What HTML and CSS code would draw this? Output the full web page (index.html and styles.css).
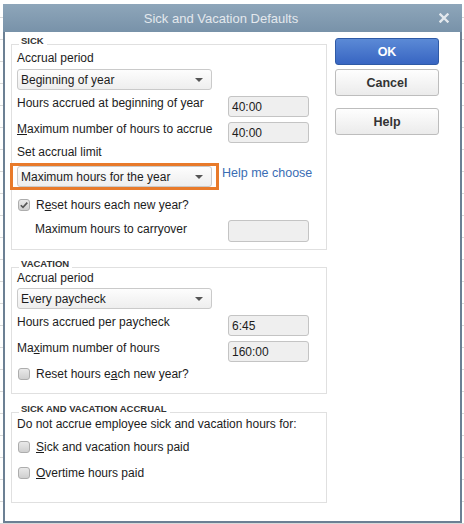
FILE: index.html
```html
<!DOCTYPE html>
<html lang="en">
<head>
    <meta charset="UTF-8">
    <meta name="viewport" content="width=device-width, initial-scale=1.0">
    <title>Sick and Vacation Defaults</title>
    <link rel="stylesheet" href="styles.css">
</head>
<body>
    <div class="dialog">
        <div class="titlebar">
            <span class="title">Sick and Vacation Defaults</span>
            <span class="close">
                <svg width="10" height="10" viewBox="0 0 10 10"><path d="M1.5 1.5 L8.5 8.5 M8.5 1.5 L1.5 8.5" stroke="#e3e8ed" stroke-width="2.4" stroke-linecap="square"/></svg>
            </span>
        </div>

        <div class="dialog-body">
            <div class="groups">
                <fieldset class="group sick">
                    <legend>SICK</legend>
                    <div class="label">Accrual period</div>
                    <div class="select"><span>Beginning of year</span><i class="caret"></i></div>
                    <div class="row first">
                        <span class="row-label">Hours accrued at beginning of year</span>
                        <div class="field">40:00</div>
                    </div>
                    <div class="row">
                        <span class="row-label"><u>M</u>aximum number of hours to accrue</span>
                        <div class="field">40:00</div>
                    </div>
                    <div class="label limit">Set accrual limit</div>
                    <div class="limit-row">
                        <div class="highlight">
                            <div class="select"><span>Maximum hours for the year</span><i class="caret"></i></div>
                        </div>
                        <a class="help-link" href="#">Help me choose</a>
                    </div>
                    <label class="checkrow reset">
                        <span class="check checked">
                            <svg width="10" height="10" viewBox="0 0 10 10"><path d="M1.8 5.2 L4 7.4 L8.3 2.6" fill="none" stroke="#555" stroke-width="1.6"/></svg>
                        </span>
                        <span>R<u>e</u>set hours each new year?</span>
                    </label>
                    <div class="row carry">
                        <span class="row-label">Maximum hours to carryover</span>
                        <div class="field"></div>
                    </div>
                </fieldset>

                <fieldset class="group vacation">
                    <legend>VACATION</legend>
                    <div class="label">Accrual period</div>
                    <div class="select"><span>Every paycheck</span><i class="caret"></i></div>
                    <div class="row first">
                        <span class="row-label">Hours accrued per paycheck</span>
                        <div class="field">6:45</div>
                    </div>
                    <div class="row">
                        <span class="row-label">Ma<u>x</u>imum number of hours</span>
                        <div class="field">160:00</div>
                    </div>
                    <label class="checkrow">
                        <span class="check"></span>
                        <span>Reset hours e<u>a</u>ch new year?</span>
                    </label>
                </fieldset>

                <fieldset class="group accrual">
                    <legend>SICK AND VACATION ACCRUAL</legend>
                    <div class="label">Do not accrue employee sick and vacation hours for:</div>
                    <label class="checkrow">
                        <span class="check"></span>
                        <span><u>S</u>ick and vacation hours paid</span>
                    </label>
                    <label class="checkrow">
                        <span class="check"></span>
                        <span><u>O</u>vertime hours paid</span>
                    </label>
                </fieldset>
            </div>

            <div class="buttons">
                <button class="btn primary">OK</button>
                <button class="btn">Cancel</button>
                <button class="btn help">Help</button>
            </div>
        </div>
    </div>
</body>
</html>
```

FILE: styles.css
```css
body {
    margin: 0;
    font-family: "Liberation Sans", Arial, sans-serif;
    font-size: 12px;
    color: #1c1c1c;
    background-color: #fff;
    background-image:
        repeating-linear-gradient(to right, transparent 0, transparent 66px, #d6d6d6 66px, #d6d6d6 67px, transparent 67px, transparent 64px),
        repeating-linear-gradient(to bottom, transparent 0, transparent 17px, #d9d9d9 17px, #d9d9d9 18px, transparent 18px, transparent 22px);
    background-size: 64px 100%, 100% 22px;
    height: 524px;
    overflow: hidden;
}
.dialog {
    margin: 4px 0 0 3px;
    width: 455px;
    background: #fff;
    border: 2px solid #6c8094;
    border-top: none;
}
.titlebar {
    display: flex;
    align-items: center;
    height: 28px;
    margin: 0 -2px;
    background: linear-gradient(#8ea6ba, #7892a9);
}
.title {
    flex: 1;
    text-align: center;
    font-size: 13px;
    color: #e3e8ed;
}
.close {
    width: 22px;
    display: flex;
    align-items: center;
    padding-right: 1px;
}
.dialog-body {
    display: flex;
    gap: 8px;
    padding: 0 0 18px 6px;
}
.groups {
    width: 316px;
    padding-top: 7px;
}
.group {
    margin: 0;
    padding: 0 17px 0 5px;
    border: 1px solid #e0e0e0;
    min-width: 0;
}
.group legend {
    margin-left: 2px;
    padding: 0 3px 0 2px;
    line-height: 10px;
    font-size: 9.5px;
    font-weight: bold;
    color: #333;
    transform: translateY(-3px);
}
.sick {
    padding-top: 3px;
    padding-bottom: 7px;
}
.vacation {
    margin-top: 12px;
    padding-bottom: 13px;
}
.accrual {
    margin-top: 13px;
    padding-top: 1px;
    padding-bottom: 23px;
}
.label {
    line-height: 12px;
}
.label.limit {
    margin-top: 3px;
}
.select {
    display: flex;
    align-items: center;
    justify-content: space-between;
    box-sizing: border-box;
    width: 195px;
    height: 21px;
    margin-top: 5px;
    padding: 0 8px 0 3px;
    border: 1px solid #cacaca;
    border-radius: 3px;
    background: linear-gradient(#fdfdfd, #eeeeee);
}
.vacation .select {
    margin-top: 4px;
}
.caret {
    width: 0;
    height: 0;
    border-left: 4px solid transparent;
    border-right: 4px solid transparent;
    border-top: 4px solid #555;
}
.row {
    display: flex;
    align-items: flex-start;
    justify-content: space-between;
    margin-top: 5px;
}
.row.first {
    margin-top: 6px;
}
.row-label {
    line-height: 14px;
}
.field {
    box-sizing: border-box;
    width: 81px;
    height: 21px;
    padding: 3px 3px 0;
    border: 1px solid #c4c4c4;
    border-radius: 3px;
    background: #efefef;
    line-height: 15px;
}
.limit-row {
    display: flex;
    align-items: flex-start;
    margin-top: 5px;
}
.highlight {
    margin-left: -7px;
    padding: 0 4px;
    border: 3px solid #e87a2a;
}
.highlight .select {
    margin-top: 0;
}
.help-link {
    margin: 3px -20px 0 3px;
    color: #3a6db4;
    text-decoration: none;
    font-size: 12.5px;
    white-space: nowrap;
}
.checkrow {
    display: flex;
    align-items: center;
    gap: 6px;
    margin-top: 11px;
    line-height: 12px;
}
.checkrow.reset {
    margin-top: 9px;
}
.vacation .checkrow {
    margin-top: 6px;
}
.accrual .checkrow + .checkrow {
    margin-top: 14px;
}
.check {
    display: flex;
    align-items: center;
    justify-content: center;
    box-sizing: border-box;
    width: 12px;
    height: 12px;
    margin-left: 1px;
    border: 1px solid #adadad;
    border-radius: 3px;
    background: linear-gradient(#e9e9e9, #cfcfcf);
}
.row.carry {
    margin-top: 9px;
    padding-left: 18px;
}
.carry .row-label {
    margin-top: 2px;
}
.carry .field {
    height: 22px;
}
.buttons {
    display: flex;
    flex-direction: column;
    width: 104px;
    padding-top: 6px;
}
.btn {
    height: 27px;
    margin-top: 4px;
    border: 1px solid #bdbdbd;
    border-radius: 3px;
    background: linear-gradient(#fefefe, #ebebeb);
    font-family: "Liberation Sans", Arial, sans-serif;
    font-size: 12.5px;
    font-weight: bold;
    color: #333;
}
.btn.primary {
    margin-top: 0;
    border-color: #2f5aa6;
    background: linear-gradient(#5b8ad6, #3865c2);
    color: #fff;
}
.btn.help {
    margin-top: 12px;
}
```
